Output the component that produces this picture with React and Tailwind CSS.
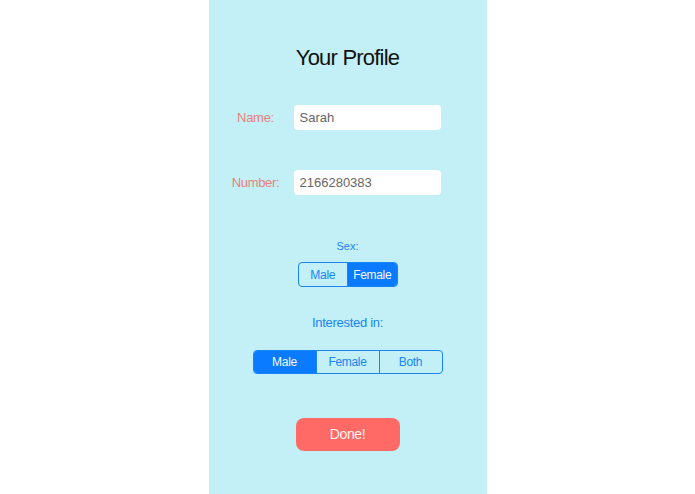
import React, { useState } from "react";

const Segmented = ({ options, value, onChange, width, height }) => (
  <div className="flex rounded-[4px] border border-[#1a84f5] overflow-hidden" style={{ width, height }}>
    {options.map((opt, i) => (
      <button
        key={opt}
        onClick={() => onChange(opt)}
        className={
          "flex-1 flex items-center justify-center text-[12px] tracking-[-0.3px] " +
          (i > 0 ? "border-l border-[#1a84f5] " : "") +
          (value === opt ? "bg-[#0a7bff] text-[#f2f8ff]" : "bg-transparent text-[#1a84f5]")
        }
      >
        {opt}
      </button>
    ))}
  </div>
);

const App = () => {
  const [name, setName] = useState("Sarah");
  const [number, setNumber] = useState("2166280383");
  const [sex, setSex] = useState("Female");
  const [interest, setInterest] = useState("Male");

  return (
    <div className="w-full bg-white" style={{ fontFamily: '"Liberation Sans", Arial, sans-serif' }}>
      <div className="mx-auto w-[278px] h-[494px] bg-[#c2f0f6] flex flex-col items-center">
        <h1 className="pt-[45px] text-[22px] leading-[26px] tracking-[-0.8px] text-[#111]">Your Profile</h1>

        <div className="mt-[34px] w-full flex items-center pl-[11px]">
          <label className="w-[72px] text-center text-[13px] tracking-[-0.3px] text-[#e8807c]">Name:</label>
          <input
            value={name}
            onChange={(e) => setName(e.target.value)}
            className="ml-[2px] w-[147px] h-[25px] rounded-[4px] bg-white px-[6px] text-[13px] text-[#666] outline-none"
          />
        </div>

        <div className="mt-[40px] w-full flex items-center pl-[11px]">
          <label className="w-[72px] text-center text-[13px] tracking-[-0.3px] text-[#e8807c]">Number:</label>
          <input
            value={number}
            onChange={(e) => setNumber(e.target.value)}
            className="ml-[2px] w-[147px] h-[25px] rounded-[4px] bg-white px-[6px] text-[13px] text-[#666] outline-none"
          />
        </div>

        <div className="mt-[44px] text-[11px] leading-[14px] text-[#1a84f5]">Sex:</div>
        <div className="mt-[9px]">
          <Segmented options={["Male", "Female"]} value={sex} onChange={setSex} width={100} height={25} />
        </div>

        <div className="mt-[28px] text-[13px] leading-[16px] tracking-[-0.3px] text-[#1a84f5]">Interested in:</div>
        <div className="mt-[19px]">
          <Segmented
            options={["Male", "Female", "Both"]}
            value={interest}
            onChange={setInterest}
            width={190}
            height={24}
          />
        </div>

        <button className="mt-[44px] w-[104px] h-[33px] rounded-[8px] bg-[#ff6a66] text-[14px] tracking-[-0.4px] text-[#fff3f0]">
          Done!
        </button>
      </div>
    </div>
  );
};

export default App;
